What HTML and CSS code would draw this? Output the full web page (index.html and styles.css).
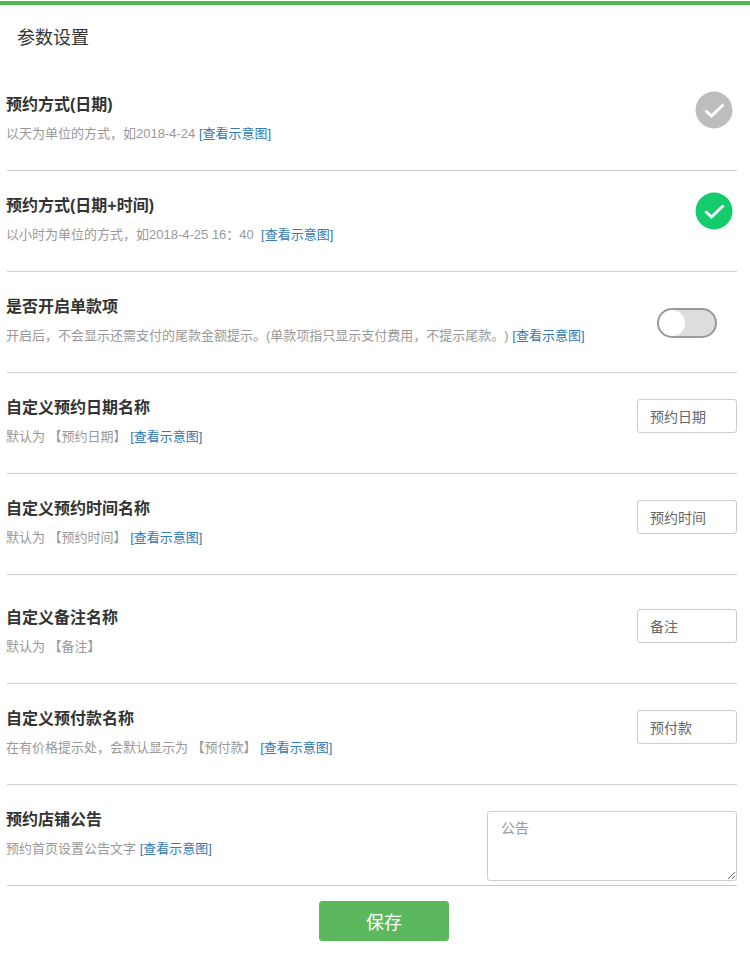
FILE: index.html
```html
<!DOCTYPE html>
<html lang="zh-CN">
<head>
<meta charset="utf-8">
<title>参数设置</title>
<link rel="stylesheet" href="styles.css">
</head>
<body>
<div class="page">
  <h1 class="page-title">参数设置</h1>
  <div class="row">
    <div class="info">
      <div class="name">预约方式(日期)</div>
      <div class="desc">以天为单位的方式，如2018-4-24 <a class="link">[查看示意图]</a></div>
    </div>
    <svg class="check" viewBox="0 0 38 38"><circle cx="19" cy="19" r="18.5" fill="#bdbdbd"/><path d="M10.5 19.5l6 5.5L28.5 13.5" fill="none" stroke="#fff" stroke-width="3"/></svg>
  </div>
  <div class="row">
    <div class="info">
      <div class="name">预约方式(日期+时间)</div>
      <div class="desc">以小时为单位的方式，如2018-4-25 16：40&nbsp; <a class="link">[查看示意图]</a></div>
    </div>
    <svg class="check" viewBox="0 0 38 38"><circle cx="19" cy="19" r="18.5" fill="#14cc6c"/><path d="M10.5 19.5l6 5.5L28.5 13.5" fill="none" stroke="#fff" stroke-width="3"/></svg>
  </div>
  <div class="row">
    <div class="info">
      <div class="name">是否开启单款项</div>
      <div class="desc">开启后，不会显示还需支付的尾款金额提示。(单款项指只显示支付费用，不提示尾款。) <a class="link">[查看示意图]</a></div>
    </div>
    <div class="toggle"><span class="knob"></span></div>
  </div>
  <div class="row">
    <div class="info">
      <div class="name">自定义预约日期名称</div>
      <div class="desc">默认为 【预约日期】 <a class="link">[查看示意图]</a></div>
    </div>
    <input class="field" type="text" value="预约日期">
  </div>
  <div class="row">
    <div class="info">
      <div class="name">自定义预约时间名称</div>
      <div class="desc">默认为 【预约时间】 <a class="link">[查看示意图]</a></div>
    </div>
    <input class="field" type="text" value="预约时间">
  </div>
  <div class="row row-tall">
    <div class="info">
      <div class="name">自定义备注名称</div>
      <div class="desc">默认为 【备注】</div>
    </div>
    <input class="field" type="text" value="备注">
  </div>
  <div class="row">
    <div class="info">
      <div class="name">自定义预付款名称</div>
      <div class="desc">在有价格提示处，会默认显示为 【预付款】 <a class="link">[查看示意图]</a></div>
    </div>
    <input class="field" type="text" value="预付款">
  </div>
  <div class="row">
    <div class="info">
      <div class="name">预约店铺公告</div>
      <div class="desc">预约首页设置公告文字 <a class="link">[查看示意图]</a></div>
    </div>
    <textarea class="notice" placeholder="公告"></textarea>
  </div>
  <div class="actions"><button class="save" type="button">保存</button></div>
</div>
</body>
</html>
```

FILE: styles.css
```css
* { box-sizing: border-box; }
html, body { margin: 0; padding: 0; background: #fff; }
body {
  padding-top: 1px;
  font-family: "Liberation Sans", "Noto Sans CJK SC", sans-serif;
  color: #333;
  overflow: hidden;
}
.page {
  height: 955px;
  border-top: 4px solid #4cb84f;
  padding: 0 13px 0 7px;
}
.page-title {
  margin: 0;
  height: 65px;
  padding: 20px 0 0 10px;
  font-size: 18px;
  line-height: 26px;
  font-weight: 400;
  color: #333;
}
.row {
  display: flex;
  justify-content: space-between;
  align-items: flex-start;
  height: 101px;
  padding-top: 24px;
  border-bottom: 1px solid #ccc;
}
.row-tall { height: 109px; padding-top: 32px; }
.info { margin-left: -1px; }
.name {
  font-size: 16px;
  line-height: 22px;
  font-weight: 700;
  color: #333;
}
.desc {
  margin-top: 9px;
  font-size: 13px;
  line-height: 18px;
  color: #999;
  text-spacing-trim: space-all;
}
.link { color: #337ab7; }
.check {
  width: 38px;
  height: 38px;
  margin: -3px 4px 0 0;
  flex: none;
}
.toggle {
  width: 60px;
  height: 30px;
  margin: 12px 20px 0 0;
  border: 2px solid #999;
  border-radius: 15px;
  background: #ddd;
  overflow: hidden;
}
.knob {
  display: block;
  width: 26px;
  height: 26px;
  border-radius: 50%;
  background: #fff;
}
.field {
  width: 100px;
  height: 34px;
  margin-top: 2px;
  padding: 0 12px;
  border: 1px solid #ccc;
  border-radius: 3px;
  font: 14px "Liberation Sans", "Noto Sans CJK SC", sans-serif;
  color: #666;
  background: #fff;
  outline: none;
}
.notice {
  display: block;
  width: 250px;
  height: 70px;
  margin-top: 2px;
  padding: 6px 13px;
  border: 1px solid #ccc;
  border-radius: 3px;
  font: 14px/20px "Liberation Sans", "Noto Sans CJK SC", sans-serif;
  color: #555;
  outline: none;
}
.notice::placeholder { color: #999; opacity: 1; }
.actions {
  display: flex;
  justify-content: center;
  padding: 15px 0 0 24px;
}
.save {
  width: 130px;
  height: 40px;
  border: 1px solid #5cb85c;
  border-radius: 3px;
  background: #5cb85c;
  color: #fff;
  font: 18px "Liberation Sans", "Noto Sans CJK SC", sans-serif;
}
```
